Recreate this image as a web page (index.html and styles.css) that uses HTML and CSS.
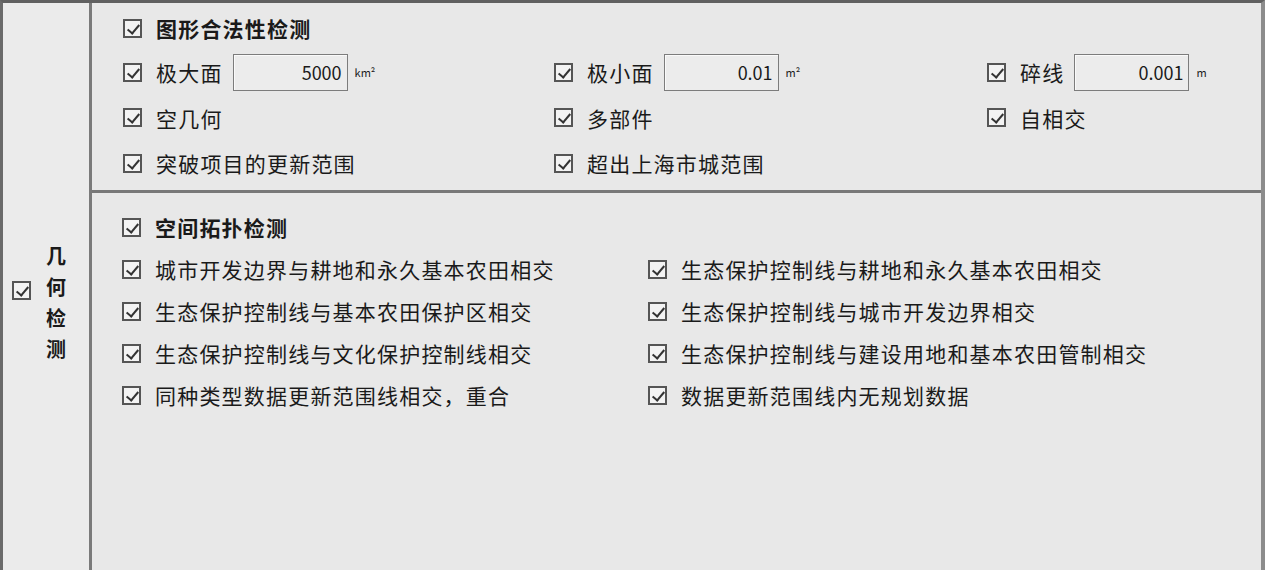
FILE: index.html
```html
<!DOCTYPE html>
<html lang="zh">
<head>
    <meta charset="UTF-8">
    <meta name="viewport" content="width=device-width, initial-scale=1.0">
    <title>几何检测</title>
    <link rel="stylesheet" href="styles.css">
</head>
<body>
<div class="frame">
    <div class="side">
        <span class="cb cb-side"></span>
        <div class="vtext">几何检测</div>
    </div>
    <div class="main">
        <div class="sec sec-top">
            <div class="row head"><span class="cb"></span><span class="lbl">图形合法性检测</span></div>
            <div class="row grid3">
                <div class="item"><span class="cb"></span><span class="lbl">极大面</span><span class="box">5000</span><span class="unit">km²</span></div>
                <div class="item"><span class="cb"></span><span class="lbl">极小面</span><span class="box">0.01</span><span class="unit">m²</span></div>
                <div class="item"><span class="cb"></span><span class="lbl">碎线</span><span class="box">0.001</span><span class="unit">m</span></div>
            </div>
            <div class="row grid3">
                <div class="item"><span class="cb"></span><span class="lbl">空几何</span></div>
                <div class="item"><span class="cb"></span><span class="lbl">多部件</span></div>
                <div class="item"><span class="cb"></span><span class="lbl">自相交</span></div>
            </div>
            <div class="row grid3">
                <div class="item"><span class="cb"></span><span class="lbl">突破项目的更新范围</span></div>
                <div class="item"><span class="cb"></span><span class="lbl">超出上海市城范围</span></div>
            </div>
        </div>
        <div class="sec sec-bottom">
            <div class="row head"><span class="cb"></span><span class="lbl">空间拓扑检测</span></div>
            <div class="row grid2">
                <div class="item"><span class="cb"></span><span class="lbl">城市开发边界与耕地和永久基本农田相交</span></div>
                <div class="item"><span class="cb"></span><span class="lbl">生态保护控制线与耕地和永久基本农田相交</span></div>
            </div>
            <div class="row grid2">
                <div class="item"><span class="cb"></span><span class="lbl">生态保护控制线与基本农田保护区相交</span></div>
                <div class="item"><span class="cb"></span><span class="lbl">生态保护控制线与城市开发边界相交</span></div>
            </div>
            <div class="row grid2">
                <div class="item"><span class="cb"></span><span class="lbl">生态保护控制线与文化保护控制线相交</span></div>
                <div class="item"><span class="cb"></span><span class="lbl">生态保护控制线与建设用地和基本农田管制相交</span></div>
            </div>
            <div class="row grid2">
                <div class="item"><span class="cb"></span><span class="lbl">同种类型数据更新范围线相交，重合</span></div>
                <div class="item"><span class="cb"></span><span class="lbl">数据更新范围线内无规划数据</span></div>
            </div>
        </div>
    </div>
</div>
</body>
</html>
```

FILE: styles.css
```css
*{
    margin: 0;
    padding: 0;
    box-sizing: border-box;
}
body{
    background-color: #e8e8e8;
    font-family: "Noto Sans CJK SC", "Noto Sans", sans-serif;
    color: #1a1a1a;
    overflow: hidden;
}
.frame{
    display: flex;
    height: 570px;
    border-top: 3px solid #606060;
    border-left: 3px solid #6a6a6a;
    border-right: 4px solid #8c8c8c;
}
.side{
    display: flex;
    align-items: center;
    width: 89px;
    padding-top: 31px;
    padding-left: 9px;
    background-color: #ebebeb;
    border-right: 3px solid #7a7a7a;
}
.cb{
    display: inline-block;
    flex: none;
    width: 19px;
    height: 19px;
    border: 2px solid #555;
    background-color: #f3f3f3;
    position: relative;
}
.cb::after{
    content: "";
    position: absolute;
    left: 5px;
    top: 1px;
    width: 5px;
    height: 10px;
    border-right: 2px solid #333;
    border-bottom: 2px solid #333;
    transform: rotate(40deg);
}
.cb-side{
    margin-bottom: 24px;
}
.vtext{
    width: 22px;
    margin-left: 15px;
    font-size: 20px;
    font-weight: bold;
    line-height: 31px;
    word-break: break-all;
}
.main{
    flex: 1;
    display: flex;
    flex-direction: column;
}
.sec-top{
    height: 190px;
    padding-top: 3px;
    padding-left: 31px;
    border-bottom: 3px solid #787878;
}
.sec-bottom{
    flex: 1;
    padding-top: 13px;
    padding-left: 30px;
}
.row{
    display: flex;
    align-items: center;
    height: 44px;
}
.sec-top .row:nth-child(3){
    height: 47px;
}
.sec-bottom .row{
    height: 42px;
}
.head .lbl{
    font-weight: bold;
}
.grid3{
    display: grid;
    grid-template-columns: 431px 433px 1fr;
}
.grid2{
    display: grid;
    grid-template-columns: 526px 1fr;
}
.item{
    display: flex;
    align-items: center;
}
.lbl{
    margin-left: 14px;
    font-size: 21px;
    letter-spacing: 1.2px;
    white-space: nowrap;
}
.box{
    width: 115px;
    height: 37px;
    margin-left: 10px;
    padding-right: 5px;
    border: 1px solid #7c7c7c;
    box-shadow: inset 1px 1px 0 #fafafa;
    background-color: #ececec;
    font-size: 18px;
    line-height: 35px;
    text-align: right;
}
.unit{
    margin-left: 7px;
    font-size: 11px;
}
```
